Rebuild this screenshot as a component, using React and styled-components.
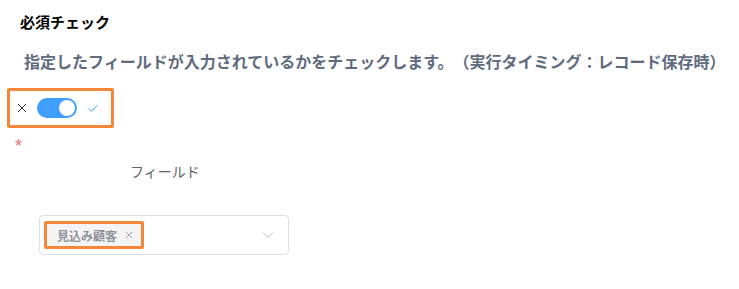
import React from 'react';
import styled, { createGlobalStyle } from 'styled-components';

const GlobalStyle = createGlobalStyle`
  body {
    margin: 0;
    background: #fff;
    font-family: "Noto Sans CJK JP", "Noto Sans", sans-serif;
    text-spacing-trim: space-all;
  }
`;

const Page = styled.div`
  padding: 10px 0 0 0;
  width: 739px;
  height: 289px;
  box-sizing: border-box;
`;

const Title = styled.h3`
  margin: 0 0 0 20px;
  font-size: 15px;
  line-height: 24px;
  font-weight: 700;
  color: #000;
`;

const Description = styled.p`
  margin: 15px 0 0 24px;
  font-size: 16px;
  line-height: 24px;
  font-weight: 700;
  color: #606b7e;
  white-space: nowrap;
`;

const Highlight = styled.div`
  display: inline-flex;
  align-items: center;
  gap: 10px;
  margin: 15px 0 0 7px;
  padding: 0 12px 0 7px;
  height: 40px;
  box-sizing: border-box;
  border: 3px solid #f5873a;
  border-radius: 2px;
`;

const Track = styled.span`
  position: relative;
  width: 40px;
  height: 20px;
  border-radius: 10px;
  background: ${p => (p.$on ? '#409eff' : '#dcdfe6')};
`;

const Knob = styled.span`
  position: absolute;
  top: 2px;
  left: ${p => (p.$on ? '22px' : '2px')};
  width: 16px;
  height: 16px;
  border-radius: 50%;
  background: #fff;
`;

const Required = styled.div`
  margin: 9px 0 0 15px;
  font-family: "Liberation Sans", sans-serif;
  font-size: 18px;
  line-height: 18px;
  height: 14px;
  color: #f56c6c;
`;

const FieldLabel = styled.div`
  margin: 10px 0 0 130px;
  font-size: 14px;
  line-height: 20px;
  color: #606266;
`;

const Select = styled.div`
  display: flex;
  align-items: center;
  justify-content: space-between;
  margin: 34px 0 0 39px;
  width: 250px;
  height: 40px;
  box-sizing: border-box;
  padding: 0 14px 0 4px;
  border: 1px solid #dcdfe6;
  border-radius: 4px;
`;

const Tag = styled.span`
  display: inline-flex;
  align-items: center;
  gap: 8px;
  height: 28px;
  box-sizing: border-box;
  padding: 0 8px 0 10px;
  border: 3px solid #f5873a;
  border-radius: 2px;
  background: #f4f4f5;
  color: #909399;
  font-size: 12px;
  font-weight: 700;
`;

const Cross = ({ size = 10, color = '#303133' }) => (
  <svg width={size} height={size} viewBox="0 0 10 10" fill="none">
    <path d="M1 1 L9 9 M9 1 L1 9" stroke={color} strokeWidth="1" />
  </svg>
);

const Check = () => (
  <svg width="12" height="12" viewBox="0 0 12 12" fill="none">
    <path d="M1.5 6.5 L4.5 9.2 L10.5 3.2" stroke="#409eff" strokeWidth="1" />
  </svg>
);

const Chevron = () => (
  <svg width="12" height="8" viewBox="0 0 12 8" fill="none">
    <path d="M1 1.5 L6 6 L11 1.5" stroke="#c0c4cc" strokeWidth="1" />
  </svg>
);

export default function App() {
  return (
    <>
      <GlobalStyle />
      <Page>
        <Title>必須チェック</Title>
        <Description>
          指定したフィールドが入力されているかをチェックします。（実行タイミング：レコード保存時）
        </Description>
        <Highlight>
          <Cross size={10} />
          <Track $on>
            <Knob $on />
          </Track>
          <Check />
        </Highlight>
        <Required>*</Required>
        <FieldLabel>フィールド</FieldLabel>
        <Select>
          <Tag>
            見込み顧客
            <Cross size={8} color="#909399" />
          </Tag>
          <Chevron />
        </Select>
      </Page>
    </>
  );
}
